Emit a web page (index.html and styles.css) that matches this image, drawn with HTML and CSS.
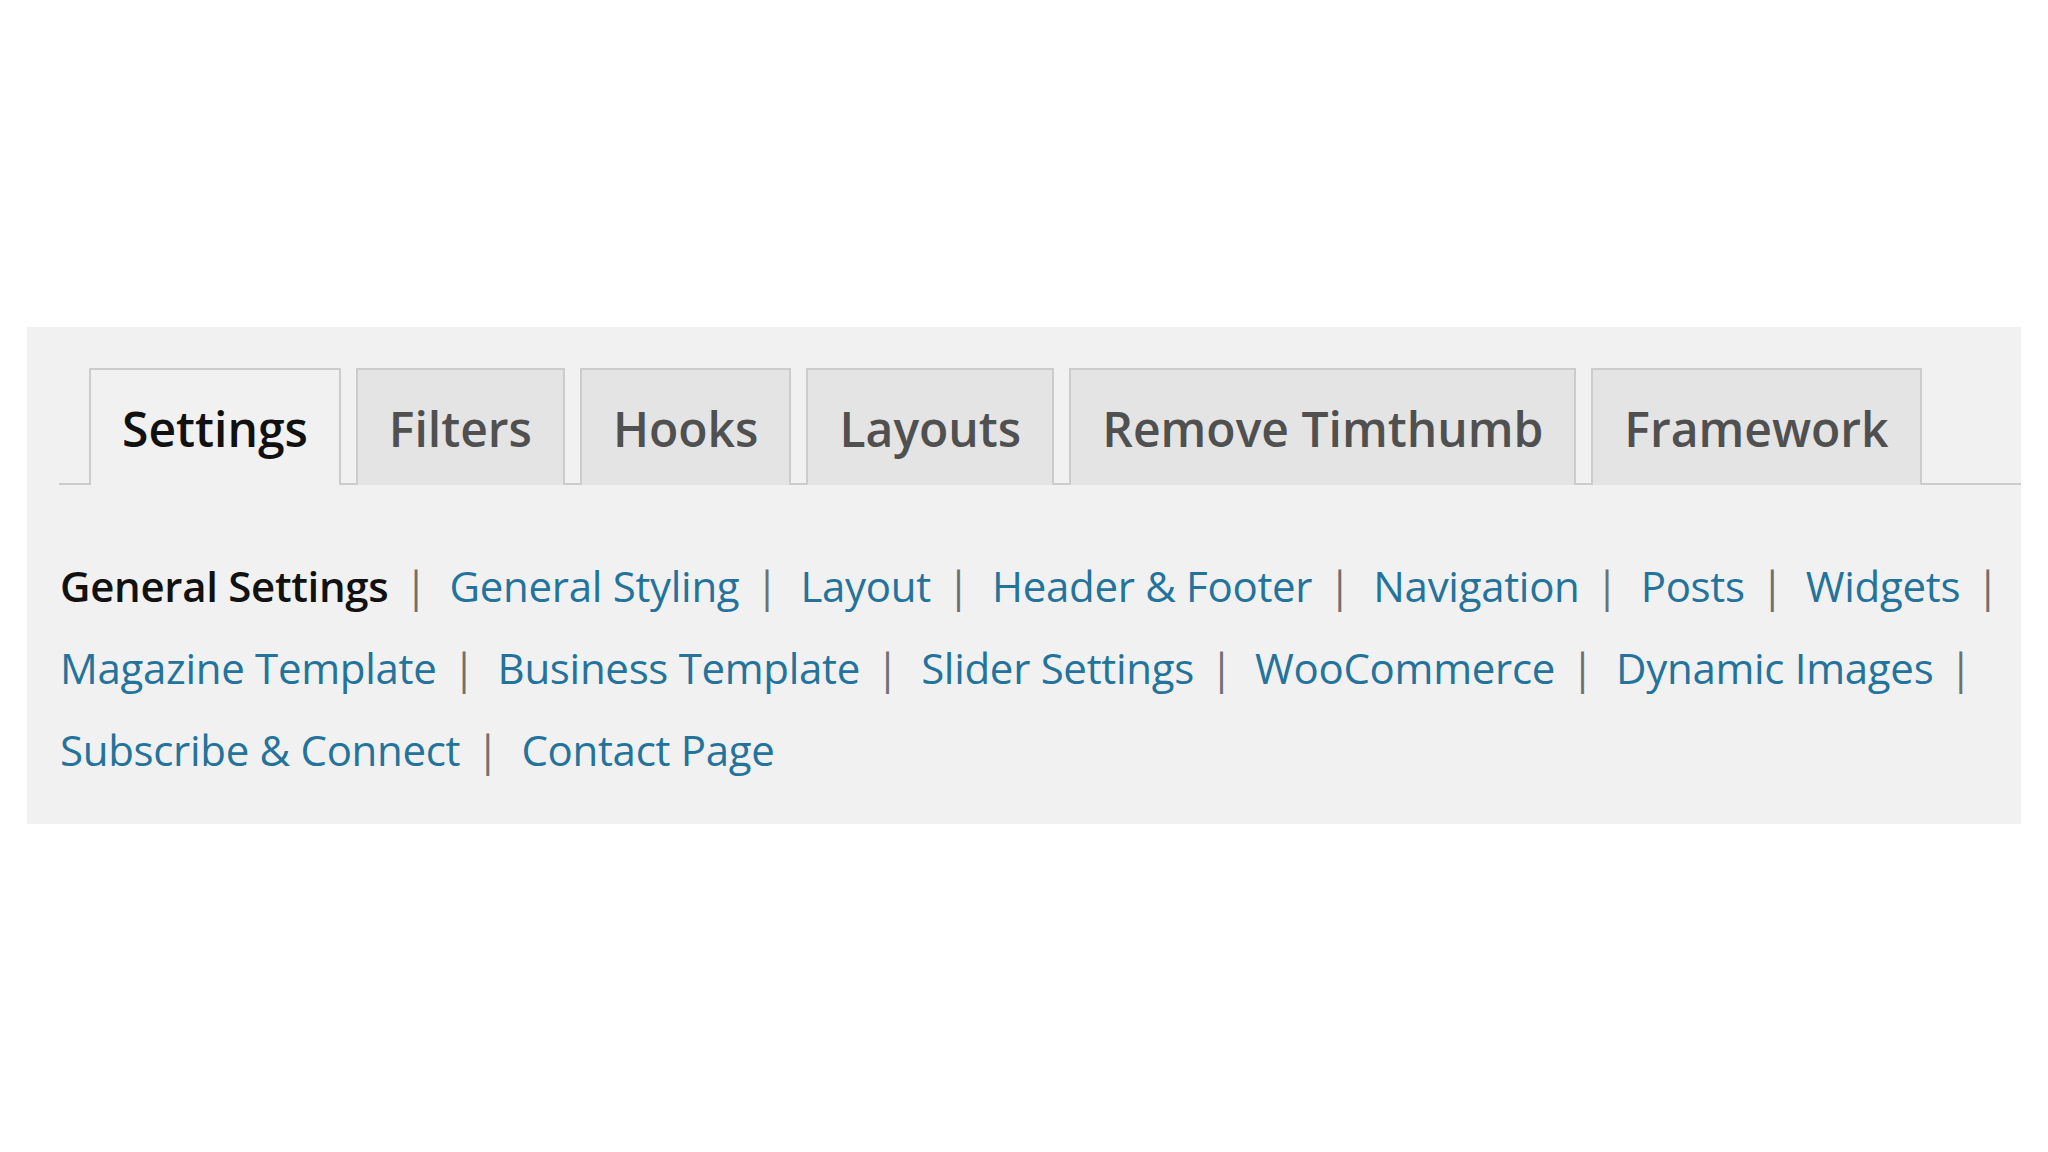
FILE: index.html
```html
<!DOCTYPE html>
<html lang="en">
<head>
<meta charset="utf-8">
<title>Settings</title>
<link rel="stylesheet" href="styles.css">
</head>
<body>
<div class="page">
  <div class="panel">
    <nav class="tabs">
      <a class="tab active" href="#">Settings</a>
      <a class="tab" href="#">Filters</a>
      <a class="tab" href="#">Hooks</a>
      <a class="tab" href="#">Layouts</a>
      <a class="tab" href="#">Remove Timthumb</a>
      <a class="tab" href="#">Framework</a>
    </nav>
    <ul class="sections">
      <li><a class="current" href="#">General Settings</a><span class="sep">|</span></li>
      <li><a href="#">General Styling</a><span class="sep">|</span></li>
      <li><a href="#">Layout</a><span class="sep">|</span></li>
      <li><a href="#">Header &amp; Footer</a><span class="sep">|</span></li>
      <li><a href="#">Navigation</a><span class="sep">|</span></li>
      <li><a href="#">Posts</a><span class="sep">|</span></li>
      <li><a href="#">Widgets</a><span class="sep">|</span></li>
      <li><a href="#">Magazine Template</a><span class="sep">|</span></li>
      <li><a href="#">Business Template</a><span class="sep">|</span></li>
      <li><a href="#">Slider Settings</a><span class="sep">|</span></li>
      <li><a href="#">WooCommerce</a><span class="sep">|</span></li>
      <li><a href="#">Dynamic Images</a><span class="sep">|</span></li>
      <li><a href="#">Subscribe &amp; Connect</a><span class="sep">|</span></li>
      <li><a href="#">Contact Page</a></li>
    </ul>
  </div>
</div>
</body>
</html>
```
FILE: styles.css
```css
html, body {
  margin: 0;
  padding: 0;
  background: #ffffff;
}

body {
  font-family: "Open Sans", "Noto Sans", "Liberation Sans", sans-serif;
  min-height: 1152px;
}

.page {
  padding: 327px 27px 0 27px;
}

.panel {
  background: #f1f1f1;
  height: 497px;
  box-sizing: border-box;
  padding: 41px 0 0 32px;
}

.tabs {
  display: flex;
  align-items: flex-end;
  gap: 15px;
  padding-left: 30px;
  border-bottom: 2px solid #cccccc;
  height: 115px;
}

.tab {
  display: block;
  box-sizing: border-box;
  height: 117px;
  margin-bottom: -2px;
  padding: 26px 31px 0 31px;
  border: 2px solid #cccccc;
  border-bottom: none;
  background: #e4e4e4;
  color: #505050;
  font-size: 48px;
  font-weight: 600;
  line-height: 65px;
  text-decoration: none;
  white-space: nowrap;
}

.tab.active {
  background: #f1f1f1;
  color: #111111;
}

.sections {
  list-style: none;
  margin: 60px 0 0 1px;
  padding: 0;
  display: flex;
  flex-wrap: wrap;
  column-gap: 22px;
  font-size: 42px;
  line-height: 82px;
  letter-spacing: -0.3px;
  max-width: 1960px;
}

.sections li {
  white-space: nowrap;
}

.sections a {
  color: #23739c;
  text-decoration: none;
}

.sections a.current {
  color: #111111;
  font-weight: 600;
}

.sep {
  color: #707070;
  letter-spacing: 0;
  margin-left: 16px;
}
```
